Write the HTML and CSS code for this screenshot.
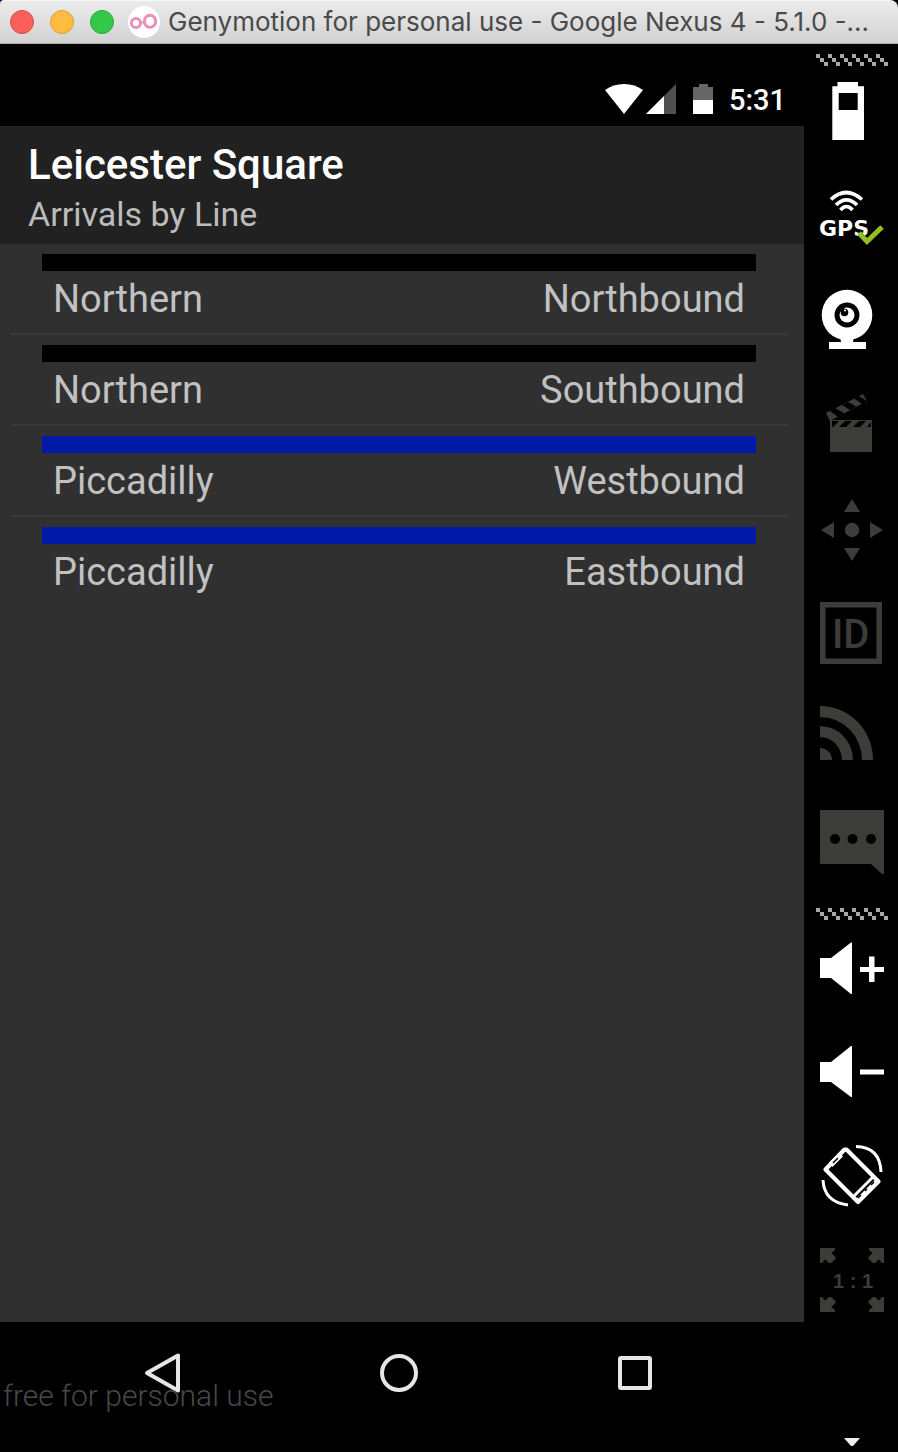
FILE: index.html
```html
<!DOCTYPE html>
<html lang="en">
<head>
<meta charset="utf-8">
<meta name="viewport" content="width=device-width, initial-scale=1">
<title>Genymotion for personal use</title>
<link rel="stylesheet" href="styles.css">
</head>
<body>
<div class="window">
  <header class="titlebar">
    <div class="lights">
      <button class="light light-close" aria-label="Close"></button>
      <button class="light light-min" aria-label="Minimize"></button>
      <button class="light light-max" aria-label="Zoom"></button>
    </div>
    <svg class="app-logo" viewBox="0 0 32 32" aria-hidden="true">
      <circle cx="16" cy="16" r="16" fill="#fff"/>
      <g fill="none" stroke="#ee8fb4" stroke-width="3">
        <circle cx="8" cy="17" r="4.6"/>
        <ellipse cx="22" cy="15.300" rx="5.700" ry="6"/>
        <path d="M12 16.500h5" stroke-width="1.500"/>
      </g>
    </svg>
    <h1 class="window-title">Genymotion for personal use - Google Nexus 4 - 5.1.0 -...</h1>
  </header>

  <div class="workspace">
    <main class="device">
      <div class="statusbar">
        <svg class="wifi" viewBox="0 0 38 32" aria-hidden="true"><path d="M0 7Q8 1 19 1T38 7L19 31Z" fill="#fff"/></svg>
        <svg class="signal" viewBox="0 0 32 32" aria-hidden="true"><path d="M31 1V31H1Z" fill="#505050"/><path d="M19 13V31H1Z" fill="#fff"/></svg>
        <svg class="charge" viewBox="0 0 20 32" aria-hidden="true"><path d="M0 4H6V1H15V4H20V17H0Z" fill="#666"/><path d="M0 17H20V31H0Z" fill="#fff"/></svg>
        <time class="clock">5:31</time>
      </div>
      <div class="appbar">
        <h2 class="station">Leicester Square</h2>
        <p class="subtitle">Arrivals by Line</p>
      </div>
      <ul class="lines">
        <li class="line"><div class="swatch northern"></div><div class="line-text"><span>Northern</span><span>Northbound</span></div></li>
        <li class="line"><div class="swatch northern"></div><div class="line-text"><span>Northern</span><span>Southbound</span></div></li>
        <li class="line"><div class="swatch piccadilly"></div><div class="line-text"><span>Piccadilly</span><span>Westbound</span></div></li>
        <li class="line"><div class="swatch piccadilly"></div><div class="line-text"><span>Piccadilly</span><span>Eastbound</span></div></li>
      </ul>
      <nav class="navbar" aria-label="Android navigation">
        <button class="nav-button" aria-label="Back"><svg viewBox="0 0 40 40"><path d="M35 2.500V37.500L4 20Z"/></svg></button>
        <button class="nav-button" aria-label="Home"><svg viewBox="0 0 40 40"><circle cx="20" cy="20" r="17"/></svg></button>
        <button class="nav-button" aria-label="Recent apps"><svg viewBox="0 0 40 40"><rect x="5" y="5" width="30" height="30" rx="1"/></svg></button>
        <span class="watermark">free for personal use</span>
      </nav>
    </main>

    <aside class="toolbar" aria-label="Emulator controls">
      <svg class="grip" viewBox="0 0 72 12" aria-hidden="true">
        <defs><path id="slash" d="M0 0h4v4h4v4h4v4H8V8H4V4H0Z"/></defs>
        <use href="#slash"/><use href="#slash" x="12"/><use href="#slash" x="24"/><use href="#slash" x="36"/><use href="#slash" x="48"/><use href="#slash" x="60"/>
      </svg>
      <div class="tools">
        <button class="tool on" aria-label="Battery"><svg viewBox="0 0 64 64"><path fill-rule="evenodd" d="M17.500 0H38V4.300H44V58H12.300V4.300H17.500ZM18.700 11V28H37.700V11Z"/></svg></button>
        <button class="tool on" aria-label="GPS"><svg viewBox="0 0 64 64">
          <g fill="none" stroke="#fff" stroke-width="3.600"><path d="M11 13.500Q26 -.5 42 13.500"/><path d="M16 19Q26.500 8.500 37 19"/><path d="M20.500 24Q26.500 17 32.500 24"/></g>
          <text class="gps-text" x="-1" y="50">GPS</text>
          <path d="M40 49L47 57L56 48" fill="none" stroke="#000" stroke-width="6"/>
          <path d="M39 47L47 55.500L62 41" fill="none" stroke="#93c01f" stroke-width="5"/></svg></button>
        <button class="tool on" aria-label="Camera"><svg viewBox="0 0 64 64"><circle cx="27" cy="25" r="25.300"/><path d="M20 46H34L33 52H46V59H9V52H21Z"/><circle cx="27" cy="25" r="12.500" fill="#000"/><circle cx="27" cy="25" r="7.500"/><circle cx="24.500" cy="22.500" r="3.800" fill="#000"/><circle cx="22" cy="19.500" r="2.500" fill="#000"/><circle cx="25" cy="20.500" r="1"/></svg></button>
        <button class="tool" aria-label="Capture"><svg viewBox="0 0 64 64"><path d="M10 26H52V58H10Z"/><path d="M6 19L43 0L47 7L10 27Z"/><g fill="#000"><path d="M12 27H19L13 33H12ZM25 27H32L26 33H19ZM39 27H46L40 33H33ZM51 28V33H47Z"/><path d="M10 17L15 14L24 19L18 23ZM22 11L28 8L36 12.500L30 16ZM34 4.500L39 2L47 7L42 10Z"/></g></svg></button>
        <button class="tool" aria-label="Directional pad"><svg viewBox="0 0 64 64"><path d="M32 1L40 14H24ZM32 63L40 50H24ZM1 32L14 24V40ZM63 32L50 24V40Z"/><circle cx="32" cy="32" r="7.200"/></svg></button>
        <button class="tool" aria-label="Identifiers"><svg viewBox="0 0 64 64"><path fill-rule="evenodd" d="M0 0H62V62H0ZM5.500 5.500V56.500H56.500V5.500Z"/><text class="id-text" x="12" y="46">ID</text></svg></button>
        <button class="tool" aria-label="Network"><svg viewBox="0 0 64 64"><path d="M0 0A53 54 0 0 1 53 54H42A42 43 0 0 0 0 11ZM0 20A33 34 0 0 1 33 54H22A22 23 0 0 0 0 31ZM0 42A12 12 0 0 1 12 54H0Z"/></svg></button>
        <button class="tool" aria-label="Phone"><svg viewBox="0 0 64 64"><path d="M1 0H63L64 1V64H62L51 54H1L0 53V1Z"/><g fill="#000"><circle cx="15" cy="29" r="5"/><circle cx="32.500" cy="29" r="5"/><circle cx="51" cy="29" r="5"/></g></svg></button>
      </div>
      <svg class="grip grip-lower" viewBox="0 0 72 12" aria-hidden="true">
        <use href="#slash"/><use href="#slash" x="12"/><use href="#slash" x="24"/><use href="#slash" x="36"/><use href="#slash" x="48"/><use href="#slash" x="60"/>
      </svg>
      <div class="tools">
        <button class="tool on" aria-label="Volume up"><svg viewBox="0 0 64 64"><path d="M0 22H11L31 6.500H32V58H31L11 42H0ZM40 31H49V20.500H54.500V31H64V36H54.500V46H49V36H40Z"/></svg></button>
        <button class="tool on" aria-label="Volume down"><svg viewBox="0 0 64 64"><path d="M0 22H11L31 6H32V57H31L11 42H0ZM40 29.500H64V34.500H40Z"/></svg></button>
        <button class="tool on" aria-label="Rotate"><svg viewBox="0 0 64 64"><g fill="none" stroke="#fff" stroke-linejoin="round"><path d="M24.500 5.500L5.500 25.500L38 58L58.500 37.500L26.500 5.500Z" stroke-width="4.200"/><path d="M33 53L53 33" stroke-width="3"/><path d="M36 57L57 36" stroke-width="3"/><path d="M10.500 21L21 10.500" stroke-width="5.500"/><path d="M36 2.500Q60 3 61 28" stroke-width="3"/><path d="M3 36Q4 58 28 61" stroke-width="3"/></g><path d="M38 54L41 51M45 47L47 45M51 41L54 38M13 19L18 14" stroke="#000" stroke-width="1.500"/></svg></button>
        <button class="tool" aria-label="Pixel perfect"><svg viewBox="0 0 64 64"><defs><path id="corner" d="M0 0H15V2L11.500 5L15.500 9V11L11 15H9L5 11.500L2 15H0Z"/></defs><use href="#corner"/><use href="#corner" transform="matrix(-1 0 0 1 64 0)"/><use href="#corner" transform="matrix(1 0 0 -1 0 64)"/><use href="#corner" transform="rotate(180 32 32)"/><text class="ratio-text" x="33" y="40" text-anchor="middle">1 : 1</text></svg></button>
      </div>
      <button class="more" aria-label="More tools"><svg viewBox="0 0 16 8"><path d="M0 0H16L9 8H7Z"/></svg></button>
    </aside>
  </div>
</div>
</body>
</html>
```

FILE: styles.css
```css
* { box-sizing: border-box; }

body {
  margin: 0;
  background: #000;
  font-family: Roboto, "Liberation Sans", sans-serif;
}

h1, h2, p, ul { margin: 0; padding: 0; }
ul { list-style: none; }
button { padding: 0; border: 0; background: none; }
svg { display: block; overflow: visible; }

.window {
  display: flex;
  flex-direction: column;
  min-height: 100vh;
}

/* Window title bar */
.titlebar {
  display: flex;
  align-items: center;
  height: 44px;
  padding: 0 10px;
  border-top: 1px solid #f6f6f6;
  border-bottom: 1px solid #b0b0b0;
  border-radius: 4px 8px 0 0;
  background: linear-gradient(#ebebeb, #d2d2d2);
}
.lights { display: flex; gap: 16px; }
.light {
  width: 24px;
  height: 24px;
  border: 1px solid;
  border-radius: 50%;
}
.light-close { background: #fc605c; border-color: #df4744; }
.light-min { background: #fdbc40; border-color: #de9f34; }
.light-max { background: #34c84a; border-color: #27aa35; }
.app-logo { width: 32px; height: 32px; margin: 0 8px 0 14px; flex: none; }
.window-title {
  flex: 1;
  overflow: hidden;
  color: #4a4a4a;
  font-family: Inter, sans-serif;
  font-size: 26px;
  font-weight: 400;
  line-height: 36px;
  white-space: nowrap;
}

.workspace { display: flex; flex: 1; }

/* Device screen */
.device {
  display: flex;
  flex: 1;
  flex-direction: column;
  min-width: 0;
  background: #303030;
}
.statusbar {
  display: flex;
  align-items: center;
  justify-content: flex-end;
  height: 82px;
  padding: 28px 18px 0 0;
  background: #000;
}
.wifi { width: 38px; height: 32px; }
.signal { width: 32px; height: 32px; margin-left: 2px; }
.charge { width: 20px; height: 32px; margin-left: 16px; }
.clock {
  margin-left: 16px;
  padding-top: 2px;
  color: #fff;
  font-size: 29px;
  font-weight: 500;
  line-height: 36px;
}
.appbar {
  padding: 14px 28px 6px;
  background: #212121;
}
.station {
  color: #fff;
  font-size: 42px;
  font-weight: 500;
  line-height: 50px;
}
.subtitle {
  color: #bcbcbc;
  font-size: 34px;
  line-height: 48px;
}
.lines { flex: 1; padding: 0 16px 0 11px; }
.line {
  padding: 10px 32px 6px 31px;
  border-bottom: 2px solid #3a3a3a;
}
.line:last-child { border-bottom: 0; }
.swatch { height: 17px; }
.northern { background: #000; }
.piccadilly { background: #0019a8; }
.line-text {
  display: flex;
  justify-content: space-between;
  padding: 0 11px;
  color: #c1c1c1;
  font-size: 38px;
  line-height: 56px;
}

.navbar {
  position: relative;
  display: flex;
  justify-content: center;
  gap: 196px;
  height: 130px;
  padding: 31px 6px 0 0;
  align-items: flex-start;
  background: #000;
}
.nav-button svg {
  width: 40px;
  height: 40px;
  fill: none;
  stroke: #e6e6e6;
  stroke-width: 4;
  stroke-linejoin: round;
}
.watermark {
  position: absolute;
  left: 3px;
  bottom: 36px;
  color: #484848;
  font-size: 30px;
  font-weight: 300;
  line-height: 40px;
  pointer-events: none;
}

/* Emulator toolbar */
.toolbar {
  display: flex;
  flex: none;
  flex-direction: column;
  align-items: center;
  width: 94px;
  padding: 10px 0 6px 2px;
  background: #000;
}
.grip { width: 72px; height: 12px; margin-bottom: 16px; fill: #a8a8a8; }
.grip-lower { margin-top: 34px; }
.tools { display: flex; flex-direction: column; gap: 40px; }
.tool svg { width: 64px; height: 64px; fill: #3c3c38; }
.tool.on svg { fill: #fff; }
.more { margin-top: auto; }
.more svg { width: 16px; height: 8px; fill: #eee; }
.gps-text { font: 700 22px "DejaVu Sans", sans-serif; }
.id-text { font: 500 40px Roboto, sans-serif; }
.ratio-text { font: 700 20px "Liberation Sans", sans-serif; }
```
